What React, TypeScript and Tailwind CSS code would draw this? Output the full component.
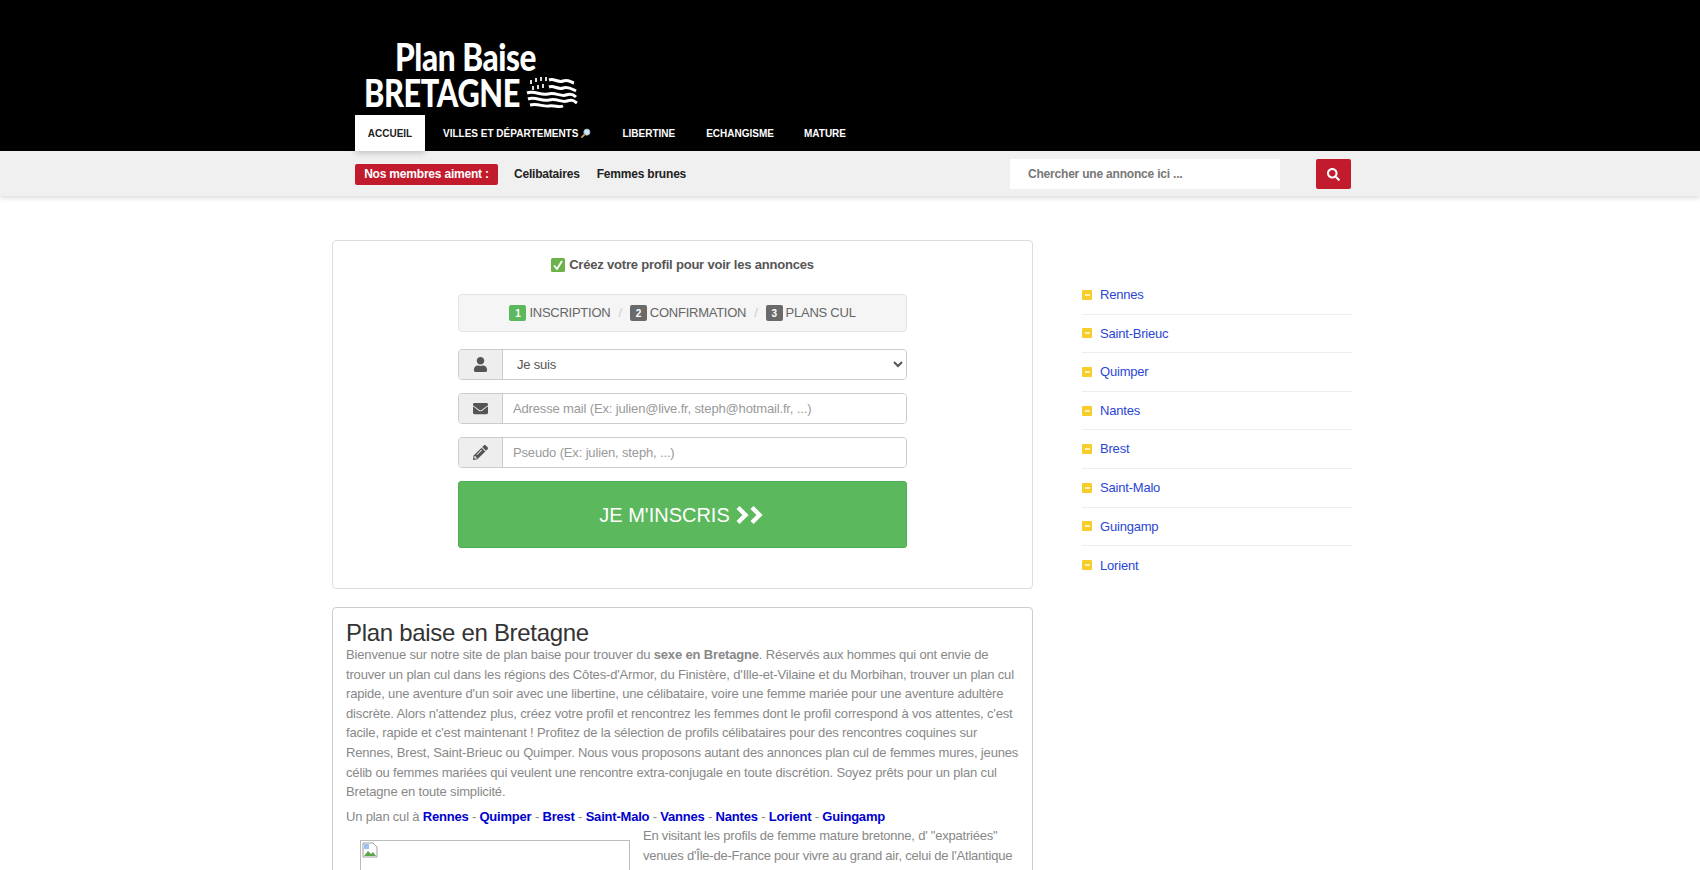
import React from 'react';
import { FaUser, FaEnvelope, FaPencilAlt, FaSearch } from 'react-icons/fa';

const navLinks = ['Libertine', 'Echangisme', 'Mature'];
const sideCities = ['Rennes', 'Saint-Brieuc', 'Quimper', 'Nantes', 'Brest', 'Saint-Malo', 'Guingamp', 'Lorient'];
const planCities = ['Rennes', 'Quimper', 'Brest', 'Saint-Malo', 'Vannes', 'Nantes', 'Lorient', 'Guingamp'];

const BzhFlag = () => (
  <svg width="54" height="34" viewBox="0 0 54 34" className="shrink-0">
    <g fill="none" stroke="#fff" strokeWidth="3">
      <path d="M25 5c5-2 9 3 14 1s7 1 11 2" />
      <path d="M25 12c5-2 9 3 14 1s9 1 13 3" />
      <path d="M3 18c8-3 13 3 21 1s13 3 18 1 8 0 10 2" />
      <path d="M4 24c8-3 13 3 21 1s13 3 18 1 7 0 10 2" />
      <path d="M6 30c8-2 13 2 19 1s10 2 14 0" />
    </g>
    <g fill="#ddd">
      <rect x="6" y="5" width="2" height="4" />
      <rect x="11" y="3" width="2" height="4" />
      <rect x="16" y="2" width="2" height="4" />
      <rect x="21" y="2" width="2" height="4" />
      <rect x="8" y="11" width="2" height="4" />
      <rect x="13" y="10" width="2" height="4" />
      <rect x="18" y="9" width="2" height="4" />
    </g>
  </svg>
);

const InputRow = ({ icon, children }: { icon: React.ReactNode; children: React.ReactNode }) => (
  <div className="flex h-[31px] rounded border border-[#ccc] shadow-[inset_0_1px_1px_rgba(0,0,0,0.075)] overflow-hidden">
    <span className="w-[44px] shrink-0 bg-[#eee] border-r border-[#ccc] flex items-center justify-center text-[#555] text-[15px]">
      {icon}
    </span>
    {children}
  </div>
);

const StepNum = ({ n, on }: { n: number; on?: boolean }) => (
  <span className={`w-[17px] h-[16px] rounded-[2px] text-white text-[10px] font-bold flex items-center justify-center mr-[3px] ${on ? 'bg-[#5cb85c]' : 'bg-[#6a6a6a]'}`}>
    {n}
  </span>
);

export default function App() {
  return (
    <div className="h-[870px] overflow-hidden bg-white font-['Liberation_Sans',Arial,sans-serif] text-[#333]">
      {/* Header */}
      <header className="bg-black h-[151px] flex flex-col justify-end">
        <div className="w-[996px] ml-[355px]">
          <div className="text-white leading-none mb-[5px] font-['Lato',sans-serif] font-black">
            <div className="pl-[40px] text-[38px] h-[37px] -mt-[1px] tracking-[-0.5px] origin-[40px_50%] scale-x-[0.83] whitespace-nowrap">Plan Baise</div>
            <div className="flex items-center h-[36px] pl-[9px]">
              <span className="w-[160px] text-[38px] tracking-[-0.5px] origin-left scale-x-[0.81] whitespace-nowrap">BRETAGNE</span>
              <BzhFlag />
            </div>
          </div>
          <nav className="flex text-[10px] font-bold uppercase text-white h-[36px]">
            <a className="w-[70px] bg-white text-[#222] flex items-center justify-center shadow-[0_2px_6px_rgba(0,0,0,0.2)] relative z-10">Accueil</a>
            <a className="ml-[18px] flex items-center gap-[2px]">
              Villes et départements
              <svg width="11" height="11" viewBox="0 0 12 12">
                <circle cx="7.5" cy="4.5" r="3.3" fill="#cfe4f5" stroke="#9fb4c4" />
                <path d="M5 7 1.5 10.5" stroke="#c9a35a" strokeWidth="2" />
              </svg>
            </a>
            <a className="ml-[31px] flex items-center">{navLinks[0]}</a>
            <a className="ml-[31px] flex items-center">{navLinks[1]}</a>
            <a className="ml-[30px] flex items-center">{navLinks[2]}</a>
          </nav>
        </div>
      </header>

      {/* Sub bar */}
      <div className="bg-[#f0f0f0] h-[45px] pt-[1px] shadow-[0_2px_5px_rgba(0,0,0,0.15)] relative">
        <div className="w-[996px] ml-[355px] h-full flex items-center text-[12px] font-bold tracking-[-0.2px]">
          <span className="w-[143px] h-[21px] bg-[#c11b2d] text-white rounded-[2px] flex items-center justify-center">Nos membres aiment :</span>
          <a className="ml-[16px] text-[#222]">Celibataires</a>
          <a className="ml-[17px] text-[#222]">Femmes brunes</a>
          <div className="ml-auto flex items-center">
            <input
              placeholder="Chercher une annonce ici ..."
              className="w-[270px] h-[30px] bg-white px-[18px] text-[12px] font-bold outline-none placeholder:text-[#777]"
            />
            <button className="ml-[36px] w-[35px] h-[30px] bg-[#c11b2d] rounded-[2px] text-white flex items-center justify-center text-[13px]">
              <FaSearch />
            </button>
          </div>
        </div>
      </div>

      {/* Main */}
      <main className="flex ml-[332px] w-[1020px] mt-[44px] items-start">
        <div className="w-[701px] shrink-0">
          <section className="h-[349px] border border-[#ddd] rounded pt-[15px]">
            <p className="flex items-center justify-center gap-[4px] text-[13px] font-bold text-[#555] h-[17px] tracking-[-0.2px]">
              <svg width="14" height="14" viewBox="0 0 14 14">
                <rect width="14" height="14" rx="1.5" fill="#6cb24a" />
                <path d="M3 7.5 6 11l5-8" fill="none" stroke="#fff" strokeWidth="1.8" />
              </svg>
              Créez votre profil pour voir les annonces
            </p>
            <div className="w-[449px] ml-[125px] mt-[21px]">
              <div className="h-[38px] bg-[#f5f5f5] border border-[#e3e3e3] rounded flex items-center justify-center text-[13px] text-[#666] tracking-[-0.25px]">
                <StepNum n={1} on />
                INSCRIPTION
                <span className="mx-[8px] text-[#ccc]">/</span>
                <StepNum n={2} />
                CONFIRMATION
                <span className="mx-[8px] text-[#ccc]">/</span>
                <StepNum n={3} />
                PLANS CUL
              </div>
              <div className="mt-[17px] flex flex-col gap-[13px]">
                <InputRow icon={<FaUser />}>
                  <select className="flex-1 bg-white text-[13px] tracking-[-0.2px] text-[#555] pl-[10px] pr-[2px] outline-none">
                    <option>Je suis</option>
                  </select>
                </InputRow>
                <InputRow icon={<FaEnvelope />}>
                  <input placeholder="Adresse mail (Ex: julien@live.fr, steph@hotmail.fr, ...)" className="flex-1 bg-white px-[10px] text-[13px] tracking-[-0.15px] outline-none placeholder:text-[#999]" />
                </InputRow>
                <InputRow icon={<FaPencilAlt />}>
                  <input placeholder="Pseudo (Ex: julien, steph, ...)" className="flex-1 bg-white px-[10px] text-[13px] tracking-[-0.15px] outline-none placeholder:text-[#999]" />
                </InputRow>
              </div>
              <button className="mt-[13px] w-full h-[67px] bg-[#5cb85c] border border-[#4cae4c] rounded-[3px] text-white text-[20px] flex items-center justify-center">
                JE M'INSCRIS
                <svg width="31" height="20" viewBox="0 0 31 20" className="ml-[5px]">
                  <path d="M3 2.5l7.5 7.5L3 17.5M17 2.5l7.5 7.5L17 17.5" fill="none" stroke="#fff" strokeWidth="4.4" />
                </svg>
              </button>
            </div>
          </section>

          <section className="mt-[18px] border border-[#ccc] rounded px-[13px] pt-[13px] pb-[20px] text-[13px] leading-[19.6px] text-[#888] tracking-[-0.16px]">
            <h1 className="text-[24px] leading-[24px] text-[#333] tracking-[-0.3px]">Plan baise en Bretagne</h1>
            <p>
              Bienvenue sur notre site de plan baise pour trouver du <strong>sexe en Bretagne</strong>. Réservés aux hommes qui ont envie de trouver un plan cul dans les régions des Côtes-d'Armor, du Finistère, d'Ille-et-Vilaine et du Morbihan, trouver un plan cul rapide, une aventure d'un soir avec une libertine, une célibataire, voire une femme mariée pour une aventure adultère discrète. Alors n'attendez plus, créez votre profil et rencontrez les femmes dont le profil correspond à vos attentes, c'est facile, rapide et c'est maintenant ! Profitez de la sélection de profils célibataires pour des rencontres coquines sur Rennes, Brest, Saint-Brieuc ou Quimper. Nous vous proposons autant des annonces plan cul de femmes mures, jeunes célib ou femmes mariées qui veulent une rencontre extra-conjugale en toute discrétion. Soyez prêts pour un plan cul Bretagne en toute simplicité.
            </p>
            <p className="mt-[5px] tracking-[-0.2px]">
              Un plan cul à{' '}
              {planCities.map((city, i) => (
                <span key={city}>
                  {i > 0 && ' - '}
                  <a className="font-bold text-[#0000cd]">{city}</a>
                </span>
              ))}
            </p>
            <div>
              <div className="float-left w-[270px] h-[200px] ml-[14px] mr-[13px] mt-[14px] border border-[#bbb] p-[1px]">
                <svg width="16" height="16" viewBox="0 0 16 16">
                  <path d="M1 1h10l4 4v10H1z" fill="#fff" stroke="#a0a0a0" />
                  <path d="M2 14l4-5 3 3 2-2 3 4z" fill="#5aa54a" />
                  <path d="M2 2h5v5H2z" fill="#9cc0f0" />
                </svg>
              </div>
              <p className="tracking-[-0.22px]">
                En visitant les profils de femme mature bretonne, d' "expatriées" venues d'Île-de-France pour vivre au grand air, celui de l'Atlantique
              </p>
            </div>
          </section>
        </div>

        {/* Sidebar */}
        <aside className="ml-[49px] w-[270px] pt-[36px] text-[13px] tracking-[-0.2px]">
          {sideCities.map((city, i) => (
            <div key={city} className={`h-[38.6px] flex items-center gap-[8px] ${i < sideCities.length - 1 ? 'border-b border-[#eee]' : ''}`}>
              <span className="w-[10px] h-[10px] bg-[#f6cd2a] rounded-[1px] flex items-center justify-center">
                <span className="w-[5px] h-[2px] bg-[#fff3b8]" />
              </span>
              <a className="text-[#2a46d6]">{city}</a>
            </div>
          ))}
        </aside>
      </main>
    </div>
  );
}
